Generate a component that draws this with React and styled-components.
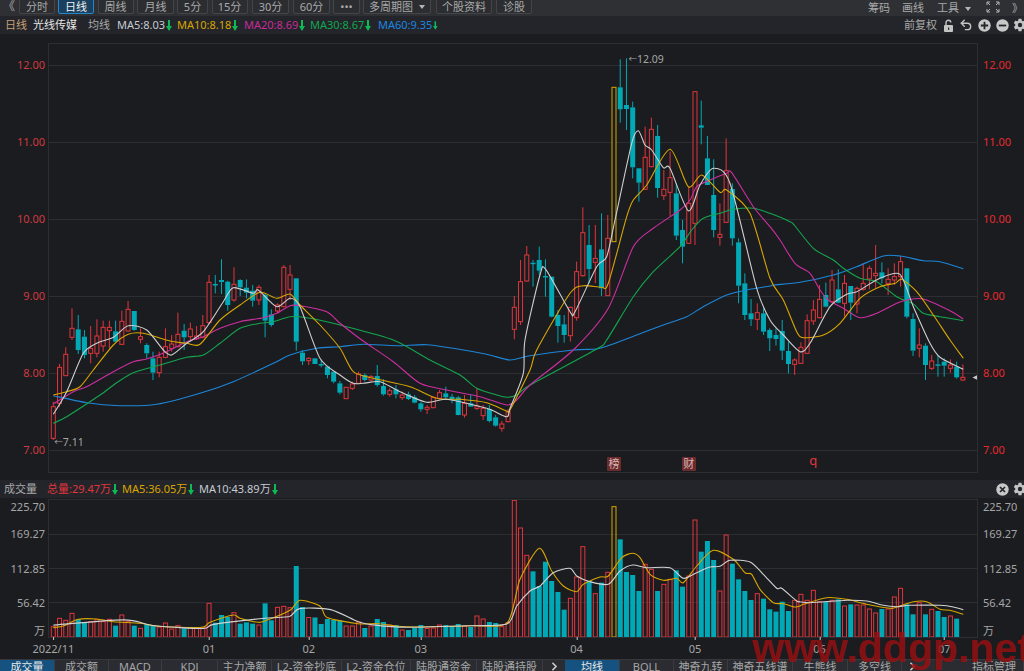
import React from "react";
import styled, { createGlobalStyle } from "styled-components";
import { Undo2, ChevronRight } from "lucide-react";
import { IoSettingsSharp } from "react-icons/io5";

const BG = "#1b1c20";
const RED = "#e0363c";
const TEAL = "#00a9b5";
const GOLD = "#d9a600";
const xAt = (i) => 53.3 + 6.23 * i;

// candles: [kind, bodyTop, bodyBottom, high, low], read in blocks with their own offset
const c1 = [
["u",470,565,455,570],["u",352,460,342,470],["u",313,377,292,378],["u",235,262,175,270],["d",238,300,195,312],["d",260,315,240,325],["u",295,310,228,340],["u",258,310,208,322],["u",232,288,212,305],["u",232,242,212,295],
["d",244,275,212,278],["u",214,283,182,285],["u",178,243,153,245],["d",183,240,183,242],["u",260,268,235,280],["d",285,310,280,325],["d",325,368,305,390],["u",322,368,305,382],["u",290,322,235,325],["u",282,295,255,305],
["u",253,290,188,292],["d",242,262,222,300],["u",237,260,218,270],["u",258,266,228,270],["u",227,262,195,265],["u",97,218,75,222],["d",102,104,75,130],["d",90,96,28,132],["d",95,165,92,182],["u",103,150,52,155],
["d",90,112,88,138],["d",113,128,88,145],["d",122,152,105,170],["u",112,150,105,165],["d",135,212,130,262],["d",193,225,178,230],["u",165,183,160,190],["u",52,170,45,172],["u",75,118,45,150],["d",85,275,85,302],
["d",308,334,300,345],["u",325,332,322,345],["d",325,342,325,342],["d",342,344,330,352]
].map(a => [a[0], ...a.slice(1).map(v => 250 + v / 3)]);
const c2 = [
["d",80,105,80,115],["d",95,125,95,130],["d",130,158,123,163],["u",142,176,142,176],["u",132,145,125,150],["u",102,130,95,130],["d",105,120,100,124],["u",110,120,105,125],["d",108,135,75,140],["d",138,163,118,167],
["u",152,163,145,170],["d",148,163,135,175],["u",165,173,155,180],["d",163,177,155,180],["d",172,188,165,190],["d",190,208,185,215],["u",202,208,195,222],["u",172,203,170,205],["u",158,175,150,178],["d",160,172,140,178],
["d",170,178,162,190],["d",172,225,168,226],["u",190,225,165,233],["d",190,200,165,200],["u",198,205,145,210],["u",205,227,195,240],["d",207,243,195,247],["d",232,257,225,260],["u",252,265,243,275],["u",215,245,207,247]
].map(a => [a[0], ...a.slice(1).map(v => 340 + v / 3)]);
const c3 = [
["u",772,838,738,868],["u",695,815,630,825],["u",615,693,588,695],["d",638,642,630,710],["d",630,662,590,675],["d",678,682,628,740],["d",680,800,680,802],["d",795,828,780,878],["d",823,855,795,878],["u",772,857,770,875],
["u",665,803,635,812],["u",548,677,472,680],["d",585,657,525,700],["u",625,637,525,700],["d",598,715,490,738],["u",565,737,495,738],["y",112,575,112,575],["d",112,178,28,218],["d",165,177,25,240],["d",172,352,155,385],
["d",355,398,355,455],["u",322,418,230,420],["u",238,350,203,352],["d",258,414,225,443],["u",418,437,360,450],["u",383,427,305,498],["d",430,557,400,570],["d",540,590,510,640],["u",460,580,410,582],["u",125,520,125,585],
["d",226,233,152,283],["d",325,405,258,405]
].map(a => [a[0], ...a.slice(1).map(v => 50 + v / 3)]);
const c4 = [
["d",285,390,178,412],["u",403,412,310,437],["u",212,367,115,368],["d",267,415,250,437],["d",427,557,415,610],["d",550,645,520,660],["d",640,658,597,678],["u",638,658,610,690],["d",640,695,625,705],["d",690,715,685,753],
["d",705,717,685,737],["d",693,752,660,780],["d",753,792,725,820],["u",780,793,775,825],["u",742,790,727,792],["u",662,760,643,762],["u",630,663,600,675],["u",598,653,555,655],["d",585,620,548,622],["u",540,605,510,607],
["d",568,608,508,610],["u",550,610,525,650],["d",558,608,558,660],["u",565,612,560,640],["u",550,568,490,572],["u",505,537,497,568],["u",520,527,435,565],["d",517,535,487,550],["u",538,550,505,585],["u",530,540,490,555],
["u",485,530,468,560],["d",505,650,505,655],["d",657,752,640,768],["u",735,745,685,772],["d",737,795,730,840],["u",783,805,765,810],["d",793,797,765,830],["d",785,797,775,830],["u",795,805,778,818],["d",800,832,785,836],["u",832,840,793,842]
].map(a => [a[0], ...a.slice(1).map(v => 100 + v / 3)]);
const candles = [...c1, ...c2, ...c3, ...c4];

const volKinds = candles.map(c => c[0]);
const v1 = [407,382,388,367,384,394,392,386,392,385,404,372,392,404,412,400,404,408,396,414,404,412,410,412,410,337,395,372,378,365,398,394,398,402,337,388,349,346,350,225].map(v => 490 + v / 3);
const v2 = [606,616.5,616.5,623,618,619,619.6,625,625,621,627,625,618,621,624,624,629,629,627,624,627.5,627,624,624,625,623,625,626,615,618,621,622];
const v3 = [407,395,28,111,193,241,285,212,270,303,356,322,258,167,270,308,275,244,47,145,243,252,300,220,235,300,280,265,238,287,255,87,182,150,207,300,132,218,265,300,327,308,323,355,362].map(v => 490 + v / 3);
const v4 = [362,390,358,340,358,328,362,362,358,355,375,370,372,372,384,396,384,384,348,322,370,400,365,400,385,390,408,405,413];
const volTops = [...v1, ...v2, ...v3, ...v4.map(v => 480 + v / 3)].slice(0, 147);

// joins the sampled line points into one smooth path (Catmull-Rom to cubic)
const build = (...segs) => {
  const p = [];
  segs.forEach(([x0, y0, s, pts]) => {
    pts.forEach(([x, y]) => {
      const px = x0 + x / s;
      if (!p.length || px > p[p.length - 1][0]) p.push([px, y0 + y / s]);
    });
  });
  const k = 0.13;
  const f = (n) => n.toFixed(1);
  let d = `M${f(p[0][0])} ${f(p[0][1])}`;
  for (let i = 0; i < p.length - 1; i++) {
    const a = p[Math.max(i - 1, 0)], b = p[i], c = p[i + 1], e = p[Math.min(i + 2, p.length - 1)];
    d += `C${f(b[0] + (c[0] - a[0]) * k)} ${f(b[1] + (c[1] - a[1]) * k)} ${f(c[0] - (e[0] - b[0]) * k)} ${f(c[1] - (e[1] - b[1]) * k)} ${f(c[0])} ${f(c[1])}`;
  }
  return d;
};

const priceLines = [
  { color: "#1c86d8", d: build(
    [0,250,3,[[160,437],[260,458],[360,467],[470,463],[600,430],[700,395],[820,340],[870,315],[950,295],[1020,290]]],
    [280,340,3,[[50,35],[120,18],[250,13],[350,17],[440,14],[520,25],[620,43],[690,60],[750,47]]],
    [500,50,3,[[220,900],[290,897],[330,885],[410,855],[490,825],[560,800],[610,770],[680,735],[750,718],[810,708]]],
    [700,100,3,[[60,595],[90,580],[150,568],[220,555],[300,547],[400,525],[470,500],[550,468],[600,468],[670,482],[720,485],[790,506]]]) },
  { color: "#14a64e", d: build(
    [0,250,3,[[160,520],[200,500],[300,435],[350,398],[400,368],[480,345],[560,322],[610,315],[660,280],[720,235],[780,220],[820,215],[870,200],[920,203],[980,215],[1020,225]]],
    [280,340,3,[[340,0],[450,60],[540,105],[590,145],[650,165],[680,172],[710,165],[750,135]]],
    [500,50,3,[[290,897],[320,870],[400,740],[460,665],[540,590],[575,540],[610,505],[660,490],[700,478],[760,475],[810,490]]],
    [700,100,3,[[110,328],[170,325],[270,365],[285,378],[340,445],[400,480],[430,505],[480,535],[530,545],[590,590],[640,612],[670,640],[720,650],[790,662]]]) },
  { color: "#cc2fa0", d: build(
    [0,250,3,[[160,462],[220,425],[260,410],[340,365],[400,335],[440,327],[500,305],[560,275],[610,260],[660,235],[720,215],[790,203],[830,190],[870,167],[900,167],[980,185],[1020,220]]],
    [280,340,3,[[245,0],[340,65],[420,130],[500,150],[600,170],[680,195],[710,180],[750,135]]],
    [500,50,3,[[220,900],[325,775],[400,590],[460,535],[540,480],[570,450],[590,410],[630,390],[680,370],[695,368],[760,470],[810,530]]],
    [700,100,3,[[95,218],[150,300],[190,350],[240,420],[285,490],[330,520],[360,570],[385,600],[430,625],[480,653],[530,640],[590,610],[620,600],[670,597],[750,632],[790,657]]]) },
  { color: GOLD, d: build(
    [0,250,3,[[160,435],[200,425],[240,410],[280,360],[340,285],[385,253],[430,250],[510,273],[560,280],[600,283],[660,210],[720,165],[780,127],[830,145],[870,132],[900,165],[960,225],[1020,295]]],
    [280,340,3,[[160,0],[220,95],[280,115],[390,140],[470,175],[540,178],[620,188],[680,213],[690,210],[750,90]]],
    [500,50,3,[[110,900],[210,730],[250,707],[305,712],[325,700],[380,500],[400,450],[440,405],[510,298],[565,410],[605,375],[660,427],[680,420],[750,490],[810,685]]],
    [700,100,3,[[155,365],[210,530],[250,600],[290,695],[310,713],[370,705],[420,670],[480,595],[540,560],[585,550],[605,538],[650,575],[700,645],[750,720],[790,775]]]) },
  { color: "#cfcfcf", d: build(
    [0,250,3,[[160,493],[200,425],[250,310],[290,280],[340,262],[385,227],[440,240],[490,300],[515,315],[560,280],[610,245],[670,155],[700,113],[760,130],[775,120],[830,170],[870,145],[900,170],[960,325],[1020,375]]],
    [280,340,3,[[125,60],[160,85],[220,130],[250,130],[300,125],[360,155],[440,187],[500,178],[620,205],[680,230],[690,205],[730,100]]],
    [500,50,3,[[75,870],[120,675],[137,658],[210,785],[225,785],[290,650],[320,620],[345,510],[395,280],[415,242],[435,285],[455,300],[490,353],[510,355],[565,482],[600,405],[640,355],[690,400],[770,715],[810,810]]],
    [700,100,3,[[150,490],[190,640],[250,705],[300,755],[330,730],[390,620],[440,583],[470,575],[540,535],[600,523],[640,620],[690,730],[720,772],[790,808]]]) },
];

const volLines = [
  { color: GOLD, d: build(
    [0,490,3,[[160,410],[190,405],[235,385],[290,384],[340,392],[420,397],[470,405],[540,409],[610,408],[630,394],[700,372],[720,382],[775,394],[800,388],[870,358],[900,328]]],
    [0,600,2.904,[[930,15],[950,48],[1040,66],[1100,66],[1180,75],[1370,72]]],
    [500,490,3,[[22,395],[60,265],[118,172],[155,240],[190,285],[230,302],[250,280],[300,258],[325,255],[365,200],[398,187],[420,200],[450,250],[490,268],[530,262],[550,275],[590,225],[640,178],[700,205],[735,245],[755,250],[780,295],[820,335],[850,338],[885,348],[900,345]]],
    [780,480,3,[[40,380],[70,370],[140,350],[200,355],[260,370],[330,382],[350,378],[400,362],[440,362],[480,385],[510,388],[550,400]]]) },
  { color: "#d2d2d2", d: build(
    [0,600,2.904,[[155,70],[360,55],[450,72],[590,80],[620,68],[770,50],[840,45],[870,22],[960,25],[1040,60],[1090,70],[1180,76],[1370,72]]],
    [500,490,3,[[22,398],[50,345],[90,300],[120,285],[160,245],[210,232],[230,255],[270,272],[325,280],[360,240],[398,222],[440,230],[510,230],[550,262],[590,245],[630,228],[660,226],[690,208],[750,213],[790,250],[830,292],[845,292],[890,330],[900,332]]],
    [780,480,3,[[50,362],[90,365],[200,358],[260,360],[310,373],[350,377],[390,373],[480,373],[520,378],[550,386]]]) },
];

const GlobalStyle = createGlobalStyle`
  html, body { margin: 0; padding: 0; background: ${BG}; }
  #root { width: 1024px; height: 671px; overflow: hidden; }
  * { box-sizing: border-box; }
`;

const Page = styled.div`
  position: relative; width: 1024px; height: 671px; overflow: hidden; background: ${BG};
  display: flex; flex-direction: column;
  font: 11px/14px "Noto Sans", "Noto Sans CJK SC", sans-serif; color: #a9a9a9;
`;
const Toolbar = styled.div`
  height: 16px; flex: none; background: #2e3034; display: flex; align-items: flex-end; overflow: hidden;
`;
const Chevron = styled.span`
  flex: none; font-size: 12px; line-height: 14px; color: #a9a9a9; margin-left: ${p => p.$ml}px; width: ${p => p.$w}px; align-self: flex-start;
`;
const ToolButton = styled.div`
  flex: none; width: ${p => p.$w}px; margin-right: ${p => p.$mr}px; height: 18px; margin-bottom: 2px;
  display: flex; align-items: center; justify-content: center; gap: 6px; padding-top: 3px;
  border: 1px solid ${p => (p.$active ? "#2786c9" : "#43454a")}; border-radius: 2px;
  background: ${p => (p.$active ? "#19405f" : "#2b2d31")};
  color: ${p => (p.$active ? "#f0f0f0" : "#a9a9a9")};
`;
const Caret = styled.i`
  display: block; width: 0; height: 0; border-left: 3.5px solid transparent; border-right: 3.5px solid transparent;
  border-top: 4px solid #b5b5b5; margin-top: 1px;
`;
const ToolRight = styled.div`
  margin-left: auto; display: flex; align-items: center; height: 16px; padding-right: 1px; color: #a9a9a9;
`;
const ToolLink = styled.span`
  margin-left: ${p => p.$ml}px; flex: none;
`;
const InfoBar = styled.div`
  height: 18px; flex: none; background: #23252a; display: flex; align-items: center; white-space: nowrap;
`;
const Info = styled.span`
  flex: none; width: ${p => p.$w}px; color: ${p => p.$c}; display: flex; align-items: center; gap: 1px;
`;
const IconRow = styled.div`
  margin-left: auto; display: flex; align-items: center; margin-right: -5px;
`;
const IconCell = styled.span`
  flex: none; width: 18px; height: 16px; display: flex; align-items: center; justify-content: center; color: #c4c4c4;
`;
const AdjustLabel = styled.span`
  margin-right: 2px; color: #a9a9a9;
`;
const ChartRow = styled.div`
  flex: none; margin-top: 9px; height: 430px; display: grid; grid-template-columns: 48px 930px 46px;
`;
const VolRow = styled.div`
  flex: none; height: 139px; margin-top: 1px; display: grid; grid-template-columns: 48px 930px 46px;
`;
const AxisColumn = styled.div`
  display: flex; flex-direction: column; padding-top: ${p => p.$pt}px; gap: ${p => p.$gap || 0}px;
  align-items: ${p => (p.$left ? "flex-end" : "flex-start")};
  padding-right: ${p => (p.$left ? 3 : 0)}px; padding-left: ${p => (p.$left ? 0 : 5)}px;
`;
const PriceTick = styled.span`
  height: 14px; flex: none; color: ${p => p.$c};
`;
const VolTick = styled.span`
  height: 14px; flex: none; margin-top: ${p => p.$mt}px; color: #a6a6a6;
`;
const Plot = styled.div`
  position: relative;
`;
const PlotSvg = styled.svg`
  display: block; width: 930px; height: ${p => p.$h}px; outline: 1px solid #2c2e33; outline-offset: -1px;
`;
const VolHeader = styled.div`
  flex: none; margin-top: 7px; height: 18px; background: #23252a; display: flex; align-items: center; white-space: nowrap;
`;
const XAxis = styled.div`
  position: relative; flex: none; height: 21px;
`;
const XLabel = styled.span`
  position: absolute; top: 4px; transform: translateX(-50%); color: #a6a6a6;
  &::before { content: ""; position: absolute; left: 50%; top: -5px; width: 1px; height: 3px; background: #c8c8c8; }
`;
const Tabs = styled.div`
  flex: none; height: 13px; background: #2a2c31; display: flex; align-items: flex-start; overflow: hidden; border-top: 1px solid #36383d;
`;
const Tab = styled.div`
  flex: none; width: ${p => p.$w}px; height: 14px; text-align: center; line-height: 14px;
  color: ${p => (p.$active ? "#e8e8e8" : "#a6a6a6")};
  background: ${p => (p.$active ? "#15527f" : "transparent")};
  border-right: 1px solid #3a3c41;
`;
const TabArrow = styled.div`
  flex: none; width: ${p => p.$w}px; height: 13px; color: #cfcfcf; display: flex; align-items: center; justify-content: center;
`;
const TabSpacer = styled.div`
  flex: none; width: ${p => p.$w}px;
`;
const Extreme = styled.span`
  position: absolute; color: #a6a6a6; white-space: nowrap; font-size: 10.5px;
`;
const ExtremeArrow = styled.span`
  font-size: 8.5px; vertical-align: 1px;
`;
const Marker = styled.span`
  position: absolute; top: 414px; width: 14px; height: 14px; line-height: 14px; text-align: center; font-size: 11px;
  color: #d8b8b8; background: #6d2a2c; border-radius: 1px; transform: translateX(-50%);
`;
const MarkerQ = styled.span`
  position: absolute; top: 410px; color: ${RED}; font-size: 13px; transform: translateX(-50%);
`;
const Watermark = styled.div`
  position: absolute; left: 752px; top: 625px; font: 700 41px/46px "Liberation Sans", sans-serif; color: rgba(150, 16, 18, 0.85); white-space: nowrap; pointer-events: none;
`;

const Down = () => (
  <svg width="6" height="11" viewBox="0 0 6 11"><path d="M2 0h2v6h2L3 11 0 6h2z" fill="#0dbb55" /></svg>
);
const Expand = () => (
  <svg width="14" height="12" viewBox="0 0 14 12" fill="none" stroke="#b5b5b5" strokeWidth="1">
    <path d="M1 4V1h3M1 1l3 3M13 4V1h-3M13 1l-3 3M1 8v3h3M1 11l3-3M13 8v3h-3M13 11l-3-3" />
  </svg>
);
const Lock = () => (
  <svg width="11" height="13" viewBox="0 0 11 13">
    <path d="M3 6V3.6a2.4 2.4 0 0 1 4.8 0" fill="none" stroke="#c4c4c4" strokeWidth="1.4" />
    <rect x="1" y="6" width="9" height="7" rx="1" fill="#c4c4c4" />
    <rect x="5" y="8.5" width="1.2" height="2.4" fill="#23252a" />
  </svg>
);
const RoundIcon = ({ kind }) => (
  <svg width="13" height="13" viewBox="0 0 13 13">
    <circle cx="6.5" cy="6.5" r="6.2" fill="#c8c8c8" />
    {kind === "plus" && <path d="M2.8 5.6h2.8V2.8h1.8v2.8h2.8v1.8H7.4v2.8H5.6V7.4H2.8z" fill="#23252a" />}
    {kind === "minus" && <path d="M2.8 5.6h7.4v1.8H2.8z" fill="#23252a" />}
    {kind === "close" && <path d="M4 4l5 5M9 4l-5 5" stroke="#23252a" strokeWidth="1.7" />}
  </svg>
);

const Candle = ({ c, i }) => {
  const [k, top, bot, hi, lo] = c;
  const x = xAt(i);
  const col = k === "d" ? TEAL : k === "y" ? GOLD : RED;
  return (
    <g>
      {hi < top && <line x1={x} x2={x} y1={hi} y2={top} stroke={col} strokeWidth="1" />}
      {lo > bot && <line x1={x} x2={x} y1={bot} y2={lo} stroke={col} strokeWidth="1" />}
      {k === "d"
        ? <rect x={x - 2.5} y={top} width="5" height={Math.max(bot - top, 1.5)} fill={col} />
        : <rect x={x - 2} y={top} width="4" height={Math.max(bot - top, 1)} fill={BG} stroke={col} strokeWidth="1" />}
    </g>
  );
};

const VolBar = ({ k, y, i }) => {
  const x = xAt(i);
  const col = k === "d" ? TEAL : k === "y" ? GOLD : RED;
  return k === "d"
    ? <rect x={x - 2.5} y={y} width="5" height={636 - y} fill={col} />
    : <rect x={x - 2} y={y} width="4" height={636 - y} fill="none" stroke={col} strokeWidth="1" />;
};

const tools = [["分时",36,3],["日线",36,3.5,true],["周线",36,3.5],["月线",37,3],["5分",31,3.5],["15分",36,4.5],["30分",37,4],["60分",37,3],["•••",27,3],["多周期图",68,5,false,true],["个股资料",56,4],["诊股",36,0]];
const maInfo = [["日线","#c7a077",28],["光线传媒","#e6e6e6",55],["均线","#a9a9a9",29],["MA5:8.03","#c6cbd2",60,1],["MA10:8.18",GOLD,67,1],["MA20:8.69","#c72b9c",66,1],["MA30:8.67","#12a650",68,1],["MA60:9.35","#1a86e0",60,1]];
const prices = ["12.00","11.00","10.00","9.00","8.00","7.00"];
const months = [["2022/11",0],["01",25],["02",41],["03",59],["04",84],["05",103],["06",123],["07",143]];
const tabsL = [["成交量",55,true],["成交额",54],["MACD",53],["KDJ",56],["主力净额",54],["L2-资金抄底",70],["L2-资金仓位",69],["陆股通资金",66],["陆股通持股",66]];
const tabsR = [["均线",55,true],["BOLL",54],["神奇九转",54],["神奇五线谱",65],["牛熊线",55],["多空线",54]];

export default function App() {
  return (
    <Page>
      <GlobalStyle />
      <Toolbar>
        <Chevron $ml={3} $w={16}>《</Chevron>
        {tools.map(([t, w, mr, active, caret]) => (
          <ToolButton key={t} $w={w} $mr={mr} $active={active}>{t}{caret && <Caret />}</ToolButton>
        ))}
        <ToolRight>
          <ToolLink $ml={0}>筹码</ToolLink>
          <ToolLink $ml={12}>画线</ToolLink>
          <ToolLink $ml={13}>工具</ToolLink>
          <ToolLink $ml={6}><Caret /></ToolLink>
          <ToolLink $ml={15}><Expand /></ToolLink>
          <ToolLink $ml={12}>》</ToolLink>
        </ToolRight>
      </Toolbar>
      <InfoBar>
        <Info $w={5} />
        {maInfo.map(([t, c, w, arrow]) => (
          <Info key={t} $w={w} $c={c}>{t}{arrow && <Down />}</Info>
        ))}
        <IconRow>
          <AdjustLabel>前复权</AdjustLabel>
          <IconCell><Lock /></IconCell>
          <IconCell><Undo2 size={14} strokeWidth={2.4} /></IconCell>
          <IconCell><RoundIcon kind="plus" /></IconCell>
          <IconCell><RoundIcon kind="minus" /></IconCell>
          <IconCell><IoSettingsSharp size={14} /></IconCell>
        </IconRow>
      </InfoBar>
      <ChartRow>
        <AxisColumn $left $pt={15} $gap={63}>
          {prices.map(p => <PriceTick key={p} $c="#cf3a3f">{p}</PriceTick>)}
        </AxisColumn>
        <Plot>
          <PlotSvg $h={430} viewBox="48 43 930 430">
            {[65, 142, 219, 296, 373, 450].map(y => (
              <line key={y} x1="48" x2="978" y1={y + 0.5} y2={y + 0.5} stroke="#2c2e33" strokeWidth="1" />
            ))}
            {candles.map((c, i) => <Candle key={i} c={c} i={i} />)}
            {priceLines.map(l => (
              <path key={l.color} d={l.d} fill="none" stroke={l.color} strokeWidth="1.1" strokeLinejoin="round" />
            ))}
            <path d="M972.5 377.5l5-2.5v5z" fill="#c8c8c8" />
          </PlotSvg>
          <Extreme style={{ left: xAt(92) + 2 - 48, top: 9 }}><ExtremeArrow>←</ExtremeArrow>12.09</Extreme>
          <Extreme style={{ left: xAt(0) + 1 - 48, top: 392 }}><ExtremeArrow>←</ExtremeArrow>7.11</Extreme>
          <Marker style={{ left: xAt(90) - 48 }}>榜</Marker>
          <Marker style={{ left: xAt(102) - 48 }}>财</Marker>
          <MarkerQ style={{ left: xAt(122) - 48 }}>q</MarkerQ>
        </Plot>
        <AxisColumn $pt={15} $gap={63}>
          {prices.map(p => <PriceTick key={p} $c="#e32a2e">{p}</PriceTick>)}
        </AxisColumn>
      </ChartRow>
      <VolHeader>
        <Info $w={4} />
        <Info $w={43} $c="#a9a9a9">成交量</Info>
        <Info $w={75} $c="#e0363c">总量:29.47万<Down /></Info>
        <Info $w={77} $c={GOLD}>MA5:36.05万<Down /></Info>
        <Info $w={90} $c="#c6cbd2">MA10:43.89万<Down /></Info>
        <IconRow>
          <IconCell><RoundIcon kind="close" /></IconCell>
          <IconCell><IoSettingsSharp size={14} /></IconCell>
        </IconRow>
      </VolHeader>
      <VolRow>
        <AxisColumn $left $pt={0}>
          <VolTick $mt={1}>225.70</VolTick>
          <VolTick $mt={13}>169.27</VolTick>
          <VolTick $mt={21}>112.85</VolTick>
          <VolTick $mt={20}>56.42</VolTick>
          <VolTick $mt={14}>万</VolTick>
        </AxisColumn>
        <Plot>
          <PlotSvg $h={139} viewBox="48 498 930 139">
            {[533, 567, 601].map(y => (
              <line key={y} x1="48" x2="978" y1={y + 0.5} y2={y + 0.5} stroke="#2c2e33" strokeWidth="1" />
            ))}
            {volTops.map((y, i) => <VolBar key={i} k={volKinds[i]} y={y} i={i} />)}
            {volLines.map(l => (
              <path key={l.color} d={l.d} fill="none" stroke={l.color} strokeWidth="1.1" strokeLinejoin="round" />
            ))}
          </PlotSvg>
        </Plot>
        <AxisColumn>
          <VolTick $mt={1}>225.70</VolTick>
          <VolTick $mt={13}>169.27</VolTick>
          <VolTick $mt={21}>112.85</VolTick>
          <VolTick $mt={20}>56.42</VolTick>
          <VolTick $mt={14}>万</VolTick>
        </AxisColumn>
      </VolRow>
      <XAxis>
        {months.map(([t, i]) => <XLabel key={t} style={{ left: xAt(i) }}>{t}</XLabel>)}
      </XAxis>
      <Tabs>
        {tabsL.map(([t, w, a]) => <Tab key={t} $w={w} $active={a}>{t}</Tab>)}
        <TabArrow $w={22}><ChevronRight size={13} strokeWidth={3} /></TabArrow>
        {tabsR.map(([t, w, a]) => <Tab key={t} $w={w} $active={a}>{t}</Tab>)}
        <TabArrow $w={20}><ChevronRight size={13} strokeWidth={3} /></TabArrow>
        <TabSpacer $w={43} />
        <Tab $w={59}>指标管理</Tab>
      </Tabs>
      <Watermark>www.ddgp.net</Watermark>
    </Page>
  );
}
